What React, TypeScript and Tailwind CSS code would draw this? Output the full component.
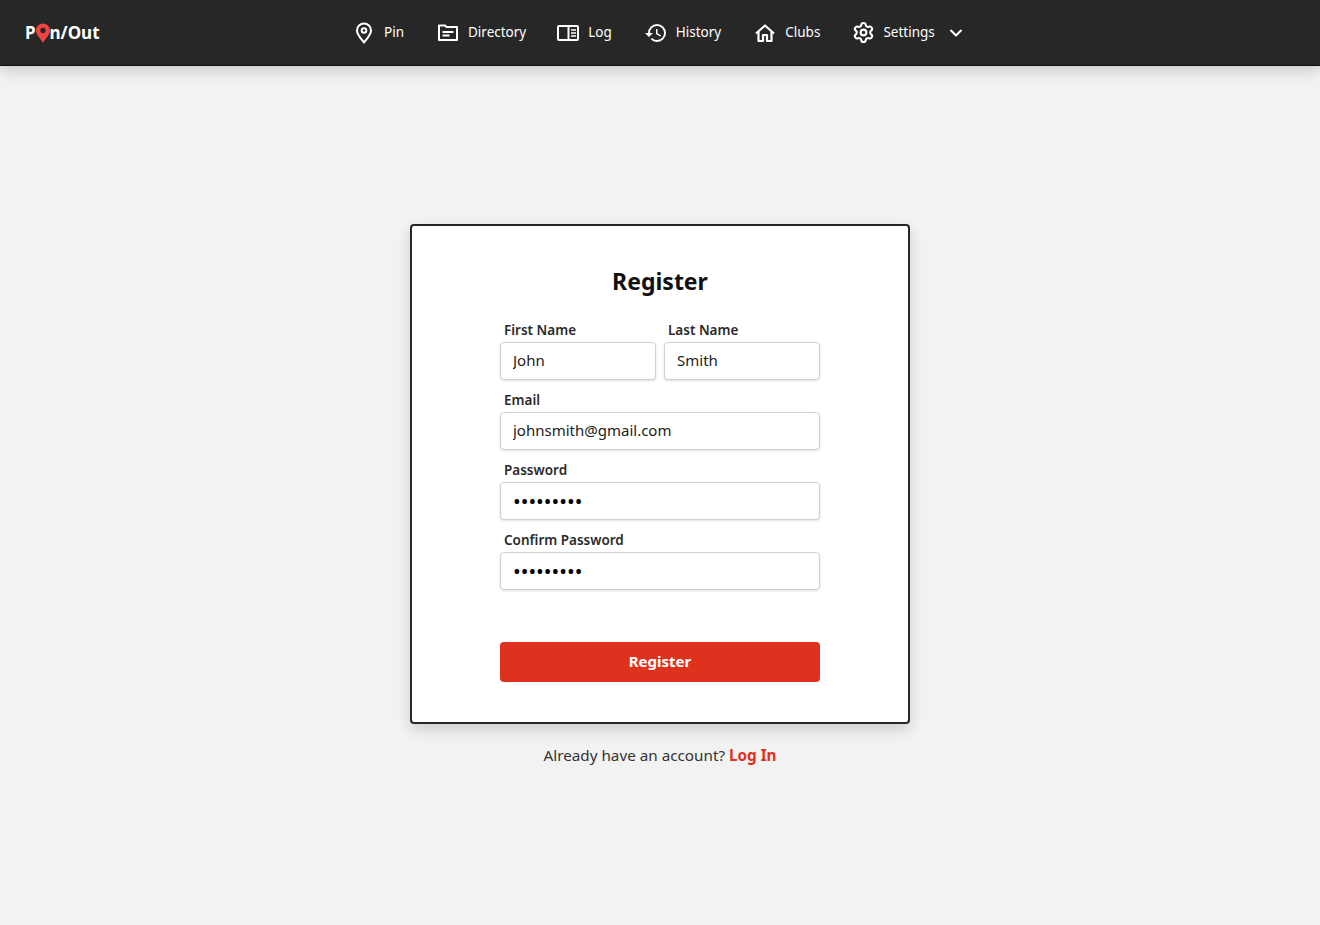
import React from 'react';
import { MdHistory } from 'react-icons/md';
import { Settings, ChevronDown } from 'lucide-react';

const font = { fontFamily: '"Noto Sans", sans-serif' };

const PinIcon = () => (
  <svg width="18" height="22" viewBox="0 0 18 22" fill="none" stroke="currentColor" strokeWidth="2" strokeLinejoin="round" className="shrink-0">
    <path d="M9 20.500C8 18.500 2 13.500 2 8.500a7 7 0 0 1 14 0C16 13.500 10 18.500 9 20.500z" />
    <circle cx="9" cy="8.500" r="2.300" />
  </svg>
);

const FolderIcon = () => (
  <svg width="22" height="20" viewBox="0 0 22 20" fill="none" stroke="currentColor" strokeWidth="2" strokeLinejoin="round" className="shrink-0">
    <path d="M2 2.500h6L9.500 4H20v13H2z" />
    <path d="M5.500 9h11M5.500 12.500h7" />
  </svg>
);

const LogIcon = () => (
  <svg width="22" height="18" viewBox="0 0 22 18" fill="none" stroke="currentColor" strokeWidth="2" strokeLinejoin="round" className="shrink-0">
    <rect x="1" y="2" width="20" height="14" rx="1" />
    <path d="M11.500 2v14" />
    <path d="M14 6h5M14 9h5M14 12h5" strokeWidth="1.500" />
  </svg>
);

const HomeIcon = () => (
  <svg width="20" height="20" viewBox="0 0 20 20" fill="none" stroke="currentColor" strokeWidth="2.200" strokeLinejoin="round" className="shrink-0">
    <path d="M1 10.500l9-8 9 8" />
    <path d="M3.500 8.500v9.500h4.500v-6h4v6h4.500V8.500" />
  </svg>
);

const navItems = [
  { label: 'Pin', icon: <PinIcon />, iconW: 'w-4', gap: 'gap-3', mr: 'mr-[34px]' },
  { label: 'Directory', icon: <FolderIcon />, iconW: 'w-5', gap: 'gap-2.5', mr: 'mr-[31px]' },
  { label: 'Log', icon: <LogIcon />, iconW: 'w-[22px]', gap: 'gap-[9px]', mr: 'mr-[33px]' },
  { label: 'History', icon: <MdHistory size={24} className="shrink-0" />, iconW: 'w-[22px]', gap: 'gap-[9px]', mr: 'mr-[34px]' },
  { label: 'Clubs', icon: <HomeIcon />, iconW: 'w-5', gap: 'gap-2.5', mr: 'mr-[33px]' },
  { label: 'Settings', icon: <Settings size={23} strokeWidth={2.2} className="shrink-0" />, iconW: 'w-5', gap: 'gap-2.5', mr: '' },
];

const Field = ({ label, value, type = 'text' }: { label: string; value: string; type?: string }) => (
  <div className="flex-1 min-w-0">
    <label className="block pl-1 text-[13.5px] leading-4 font-semibold text-[#2b2b2b] mb-1">{label}</label>
    <input
      readOnly
      type={type}
      value={value}
      style={font}
      className={`w-full h-[38px] px-3 text-[#222] bg-white border border-[#d0d0d0] rounded shadow-sm outline-none ${
        type === 'password' ? 'text-[20.5px] text-black' : 'pb-0.5 text-[15px]'
      }`}
    />
  </div>
);

export default function App() {
  return (
    <div style={font} className="min-h-screen bg-[#f2f2f2] flex flex-col">
      <nav className="h-[66px] shrink-0 bg-[#272727] border-b border-[#111] shadow-[0_4px_14px_rgba(0,0,0,0.18)] flex items-center pl-[25px] text-white">
        <div className="w-[331px] flex items-center text-[17px] font-bold leading-none">
          <span>P</span>
          <svg width="16" height="20" viewBox="0 0 16 20" className="mx-[-1px]">
            <path d="M8 20C6.500 16.500 1 12.500 1 7.500a7 7 0 0 1 14 0C15 12.500 9.500 16.500 8 20z" fill="#ef4444" />
            <circle cx="8" cy="7.500" r="2.700" fill="#272727" />
          </svg>
          <span>n/Out</span>
        </div>
        <div className="flex items-center">
          {navItems.map((item) => (
            <div key={item.label} className={`flex items-center ${item.gap} ${item.mr}`}>
              <span className={`${item.iconW} flex justify-center`}>{item.icon}</span>
              <span className="text-[13.5px]">{item.label}</span>
            </div>
          ))}
        </div>
        <ChevronDown size={20} strokeWidth={2.5} className="ml-[11px]" />
      </nav>

      <main className="flex flex-col items-center pt-[158px]">
        <div className="w-[500px] h-[500px] bg-white border-2 border-[#272727] rounded shadow-[0_6px_14px_rgba(0,0,0,0.15)] px-[88px] pt-10">
          <h1 className="text-center text-[23px] leading-[30px] font-bold text-[#111] mb-[26px]">Register</h1>
          <div className="flex flex-col gap-3">
            <div className="flex gap-2">
              <Field label="First Name" value="John" />
              <Field label="Last Name" value="Smith" />
            </div>
            <Field label="Email" value="johnsmith@gmail.com" />
            <Field label="Password" value="password1" type="password" />
            <Field label="Confirm Password" value="password1" type="password" />
          </div>
          <button className="w-full h-10 pb-px mt-[52px] bg-[#de311e] text-white text-[15px] font-bold rounded">Register</button>
        </div>
        <p className="mt-[21px] text-[15.25px] leading-5 text-[#333]">
          Already have an account? <a className="font-bold text-[#de311e]">Log In</a>
        </p>
      </main>
    </div>
  );
}
